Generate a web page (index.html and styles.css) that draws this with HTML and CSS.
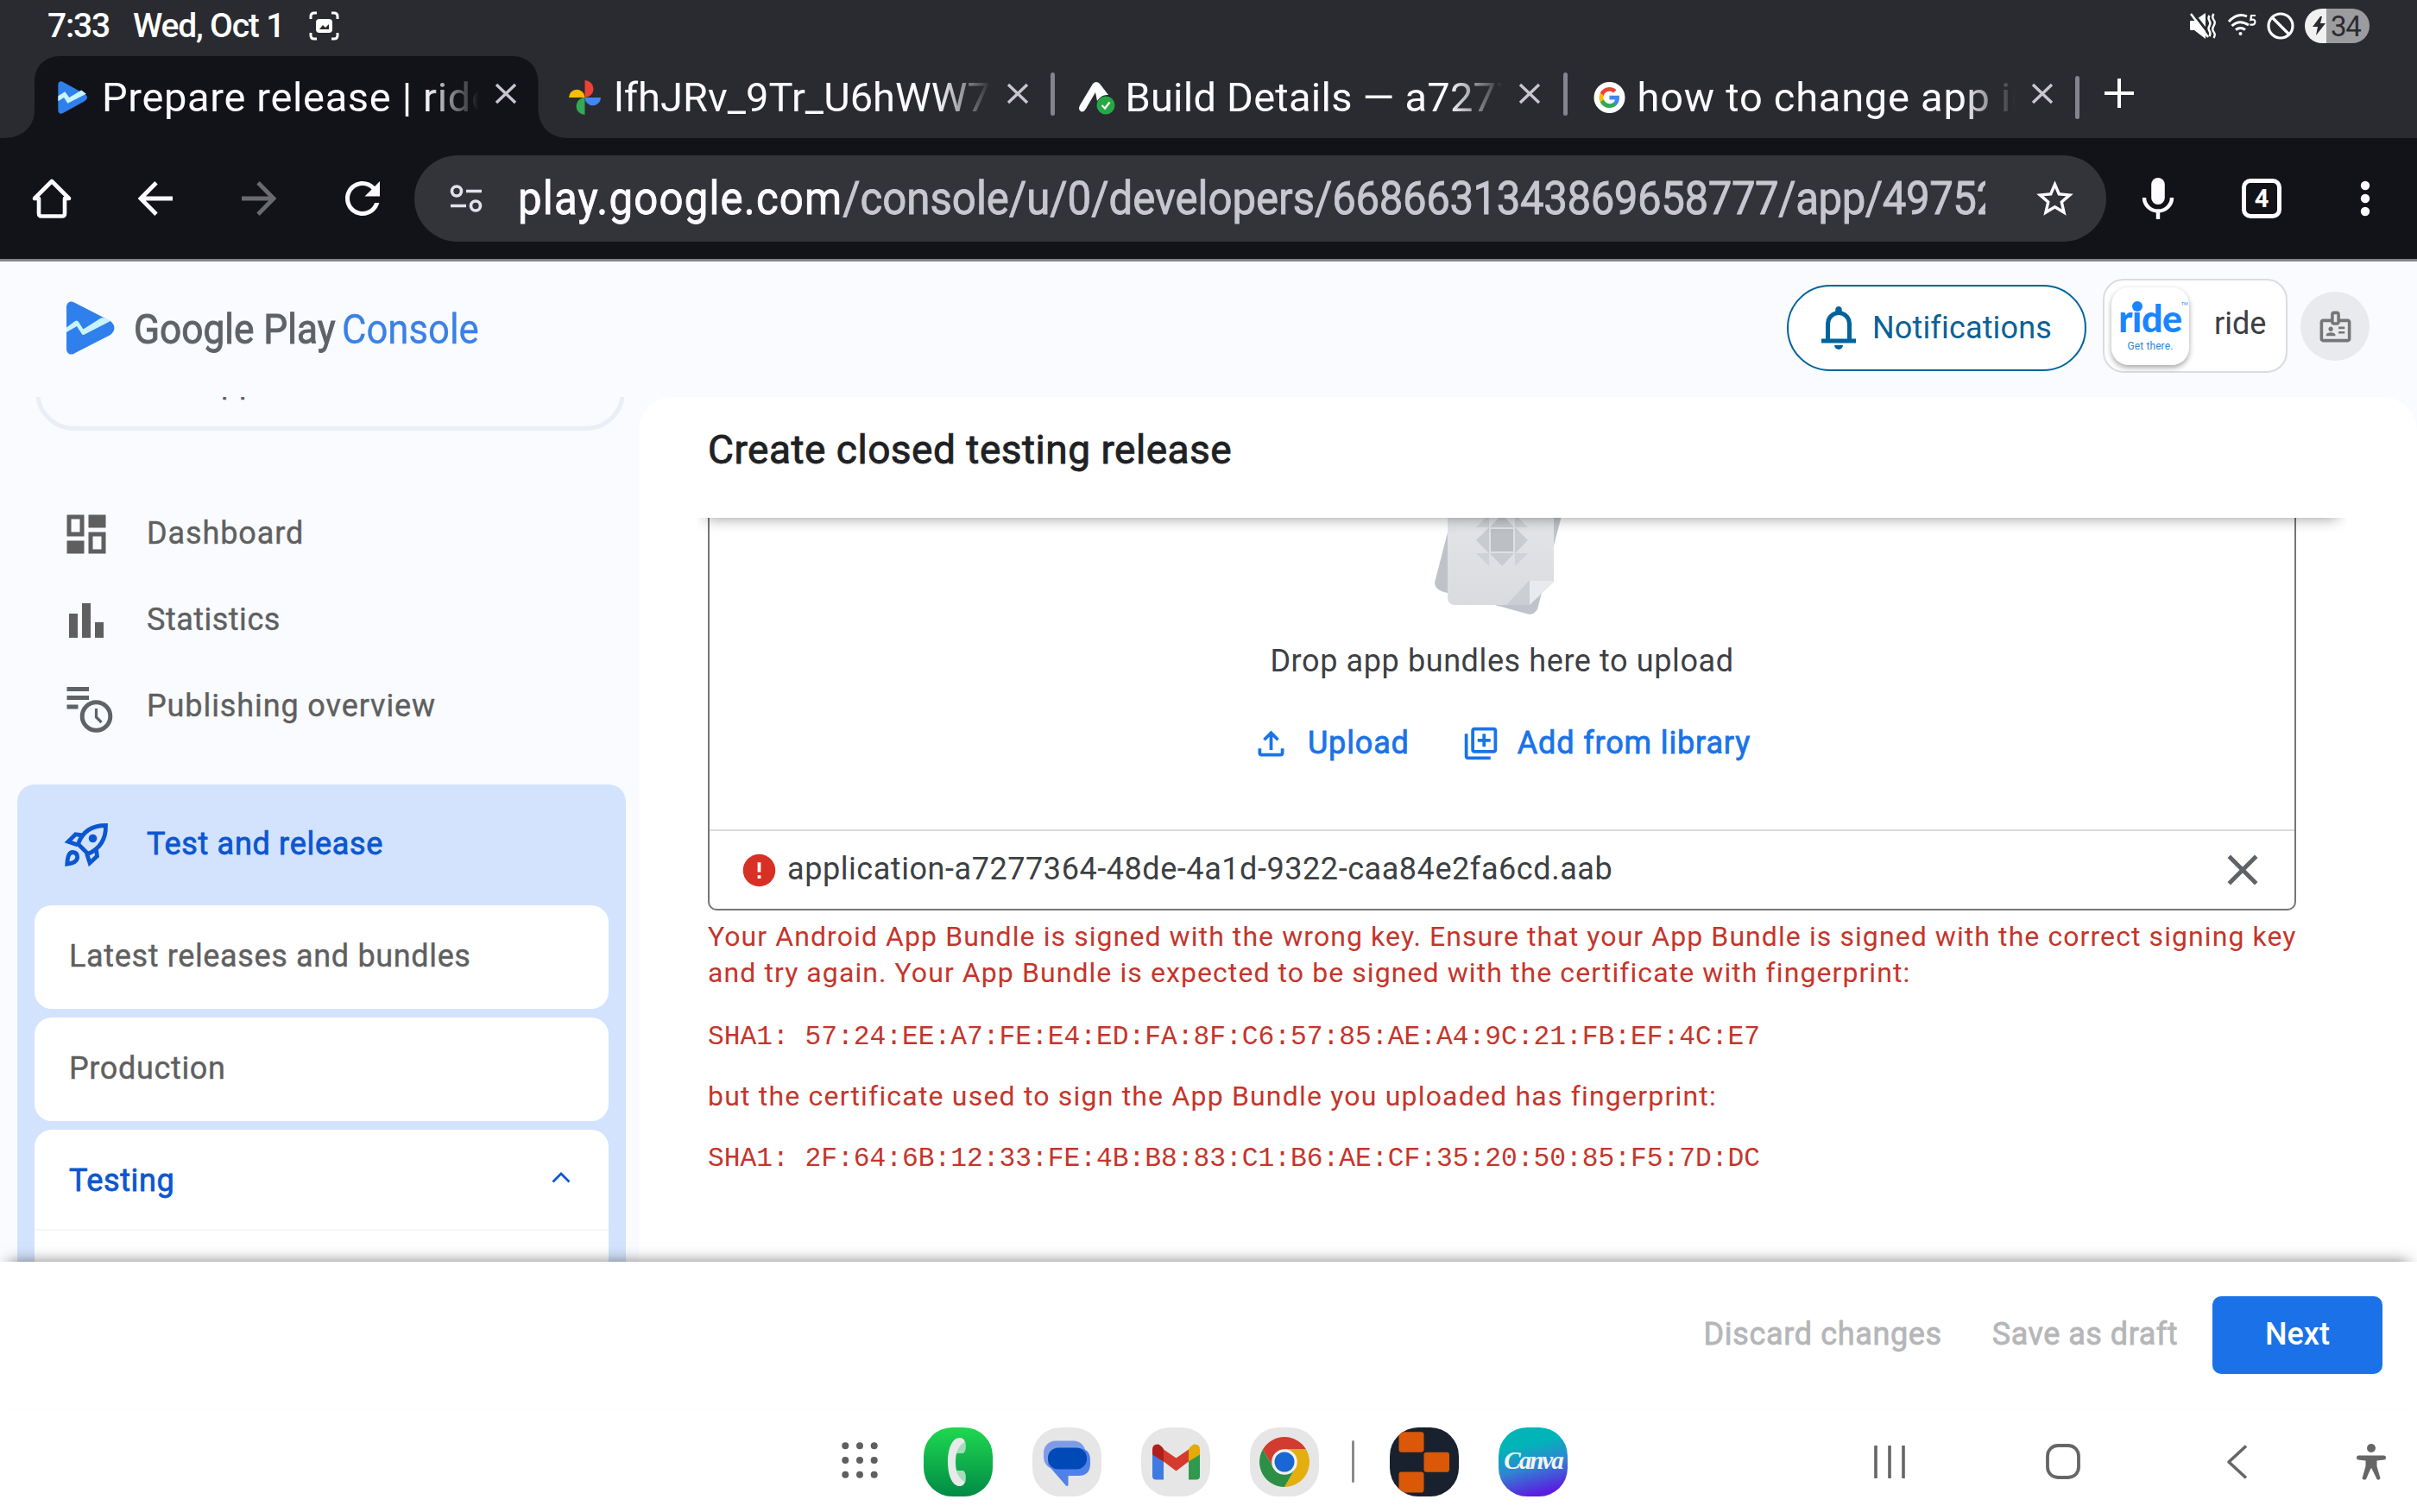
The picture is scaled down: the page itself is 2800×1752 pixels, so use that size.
FILE: index.html
```html
<!DOCTYPE html>
<html lang="en">
<head>
<meta charset="utf-8">
<title>Prepare release | ride</title>
<link rel="stylesheet" href="styles.css">
</head>
<body>
<div class="screen">

  <header class="status">
    <span class="time">7:33</span>
    <span class="date">Wed, Oct 1</span>
    <svg width="35" height="34" viewBox="0 0 35 34" fill="none" stroke="#fff" stroke-width="3"><path d="M2 9V6Q2 2 6 2H9M26 2h3q4 0 4 4v3M33 25v3q0 4-4 4h-3M9 32H6q-4 0-4-4v-3"/><rect x="8" y="9" width="19" height="16" rx="4" fill="#fff" stroke="none"/><path d="M12 21l4-5 3 3 4-4v6z" fill="#2a2b30" stroke="none"/></svg>
    <div class="indicators">
      <svg class="mute" width="30" height="30" viewBox="0 0 30 30" fill="#fff"><path d="M0 10q0-1 1-1h4l13-9v30L5 20H1q-1 0-1-1z"/><path d="M3.500 0L26 29" stroke="#2a2b30" stroke-width="3"/><path d="M1 1l20 27" stroke="#fff" stroke-width="2.500"/><path d="M22.500 3q-2 3 0 6t0 6 0 6 0 6M27.500 1q-2.500 4 0 7t0 7 0 7 0 7" fill="none" stroke="#fff" stroke-width="2.400"/></svg>
      <svg class="wifi" width="34" height="26" viewBox="0 0 34 26" fill="none" stroke="#fff" stroke-width="3"><path d="M1 9Q11-2 22 3M4.500 14Q13 6 24 13M9 18.500q5.500-4 11 0"/><circle cx="14.500" cy="23" r="2" fill="#fff" stroke="none"/><path d="M32 2h-5l-.6 5q5-1.500 5 2.500t-6 3" stroke-width="2.200"/></svg>
      <svg class="block" width="32" height="32" viewBox="0 0 32 32" fill="none" stroke="#fff" stroke-width="3.200"><circle cx="16" cy="16" r="14"/><path d="M6 6l20 20"/></svg>
      <span class="battery"><svg width="15" height="22" viewBox="0 0 15 22"><path d="M9 0L0 12h6L4 22 15 8H9l2-8z" fill="#2a2b30"/></svg>34</span>
    </div>
  </header>

  <nav class="tabs">
    <svg class="tab-shape" width="660" height="95" viewBox="0 0 660 95"><path d="M4 95C26 95 40 82 40 62V30C40 12 52 0 70 0H593.500C611 0 623.500 12 623.500 30V60C623.500 80 636 95 658 95z" fill="#121318"/></svg>
    <div class="tab">
      <svg class="favicon" width="36" height="38" viewBox="0 0 56 62"><path d="M0 7C0 1 5-1.500 10 2L50 24Q60 31 50 38L10 60C5 63.500 0 61 0 55z" fill="#2f80ed"/><path d="M0 28L13 20 21 31 44 17 53 24 18 42 11 31 0 38z" fill="#c8f4ff"/></svg>
      <span class="label t1">Prepare release | ride</span>
      <svg class="x" width="26" height="25" viewBox="0 0 26 25"><path d="M2 2l22 21M24 2L2 23"/></svg>
    </div>
    <div class="tab">
      <svg class="favicon" width="37" height="40" viewBox="0 0 37 40"><path d="M18.500 0A10 10 0 0 1 18.500 20z" fill="#ea4335"/><path d="M0 20A9.250 9.250 0 0 1 18.500 20z" fill="#fbbc04"/><path d="M18.500 40A10 10 0 0 1 18.500 20z" fill="#34a853"/><path d="M37 20A9.250 9.250 0 0 1 18.500 20z" fill="#4285f4"/></svg>
      <span class="label t2">lfhJRv_9Tr_U6hWW7_</span>
      <svg class="x" width="26" height="25" viewBox="0 0 26 25"><path d="M2 2l22 21M24 2L2 23"/></svg>
    </div>
    <div class="tab">
      <svg class="favicon wide" width="42" height="38" viewBox="0 0 42 38"><path d="M16 3Q20-1 24 3L34 16Q26 15 21 23L19 13 8 32Q4 38 1 34-1 32 1 28z" fill="#fff"/><circle cx="31" cy="28" r="10.500" fill="#28a745"/><path d="M26.500 28l3.500 3.500 5.500-7" fill="none" stroke="#fff" stroke-width="2.200"/></svg>
      <span class="label t3">Build Details — a7277</span>
      <svg class="x" width="26" height="25" viewBox="0 0 26 25"><path d="M2 2l22 21M24 2L2 23"/></svg>
    </div>
    <div class="tab">
      <svg class="favicon" width="36" height="36" viewBox="-6 -6 36 36"><circle cx="12" cy="12" r="18" fill="#fff"/><path fill="#4285f4" d="M23.500 12.270c0-.85-.08-1.670-.22-2.450H12v4.640h6.450a5.520 5.520 0 0 1-2.390 3.620v3h3.870c2.260-2.090 3.570-5.160 3.570-8.810z"/><path fill="#34a853" d="M12 24c3.240 0 5.960-1.070 7.940-2.910l-3.870-3a7.200 7.200 0 0 1-10.730-3.780h-4v3.100A12 12 0 0 0 12 24z"/><path fill="#fbbc04" d="M5.340 14.310a7.200 7.200 0 0 1 0-4.610v-3.100h-4a12 12 0 0 0 0 10.810z"/><path fill="#ea4335" d="M12 4.770c1.760 0 3.340.61 4.590 1.800l3.440-3.440A12 12 0 0 0 1.340 6.600l4 3.100A7.150 7.150 0 0 1 12 4.770z"/></svg>
      <span class="label t4">how to change app ic</span>
      <svg class="x" width="26" height="25" viewBox="0 0 26 25"><path d="M2 2l22 21M24 2L2 23"/></svg>
    </div>
    <div class="newtab"><svg width="34" height="34" viewBox="0 0 34 34"><path d="M17 0v34M0 17h34" stroke="#fff" stroke-width="4"/></svg></div>
  </nav>

  <div class="toolbar">
    <div class="cell"><svg width="46" height="46" viewBox="0 0 46 46"><path d="M23 3L3 23H8V40Q8 43.500 11 43.500H35Q38 43.500 38 40V23H43z" fill="none" stroke="#fdfbff" stroke-width="4.600" stroke-linejoin="round"/></svg></div>
    <div class="cell"><svg width="40" height="40" viewBox="0 0 40 40"><path d="M40 20H4M21 1.800L3 20 21 38.200" fill="none" stroke="#fdfbff" stroke-width="4.800"/></svg></div>
    <div class="cell"><svg width="40" height="40" viewBox="0 0 40 40"><path d="M0 20H36M19 1.800L37 20 19 38.200" fill="none" stroke="#6b6a70" stroke-width="4.800"/></svg></div>
    <div class="cell"><svg width="60" height="60" viewBox="0 0 24 24"><path fill="#fdfbff" d="M17.650 6.350C16.200 4.900 14.210 4 12 4c-4.420 0-7.990 3.580-7.990 8s3.570 8 7.990 8c3.730 0 6.840-2.550 7.730-6h-2.080c-.82 2.330-3.040 4-5.650 4-3.310 0-6-2.690-6-6s2.690-6 6-6c1.660 0 3.140.69 4.220 1.780L13 11h7V4l-2.350 2.350z"/></svg></div>
    <div class="omnibox">
      <div class="cell"><svg width="38" height="32" viewBox="0 0 38 32" fill="none" stroke="#e3e1e9" stroke-width="3.600"><circle cx="8" cy="7.500" r="5.500"/><path d="M19 7.500H37M1 24.500H19"/><circle cx="30" cy="24.500" r="5.500"/></svg></div>
      <div class="url"><div class="url-text"><span class="host">play.google.com</span><span class="path">/console/u/0/developers/</span><span class="digits">6686631343869658777/app/49752</span></div></div>
      <div class="cell"><svg width="51" height="51" viewBox="0 0 24 24"><path fill="#fdfbff" d="M22 9.240l-7.190-.62L12 2 9.190 8.630 2 9.240l5.460 4.730L5.820 21 12 17.270 18.180 21l-1.630-7.030L22 9.240zM12 15.400l-3.760 2.270 1-4.280-3.320-2.880 4.380-.38L12 6.100l1.710 4.040 4.380.38-3.320 2.880 1 4.280L12 15.400z"/></svg></div>
    </div>
    <div class="cell"><svg width="36" height="48" viewBox="0 0 36 48"><rect x="10.200" y="0" width="15.600" height="31" rx="7.800" fill="#fdfbff"/><path d="M2 23A16 15.500 0 0 0 34 23M18 38v10" fill="none" stroke="#fdfbff" stroke-width="4.400"/></svg></div>
    <div class="cell"><span class="count">4</span></div>
    <div class="cell"><svg width="12" height="42" viewBox="0 0 12 42" fill="#fdfbff"><circle cx="6" cy="6" r="5.200"/><circle cx="6" cy="21" r="5.200"/><circle cx="6" cy="36" r="5.200"/></svg></div>
  </div>

  <div class="page">
    <div class="appbar">
      <svg class="logo" width="56" height="62" viewBox="0 0 56 62"><path d="M0 7C0 1 5-1.500 10 2L51 23Q60 31 51 39L10 60C5 63.500 0 61 0 55z" fill="#2f80ed"/><path d="M0 30.600L10 23Q13 21.500 14 24L19.400 32.500 40 19.500Q45 18 51 23L21 38.500Q18.500 40 17.500 37.500L12 29 0 36z" fill="#c8f4ff"/></svg>
      <span class="brand">Google Play</span><span class="console">Console</span>
      <div class="appbar-right">
        <button class="notif"><svg width="60" height="60" viewBox="0 0 24 24"><path fill="#00639b" d="M4 19v-2h2v-7q0-2.075 1.250-3.688Q8.500 4.700 10.500 4.200v-.7q0-.625.438-1.062Q11.375 2 12 2t1.063.438Q13.500 2.875 13.500 3.500v.7q2 .5 3.250 2.112Q18 7.925 18 10v7h2v2Zm8 3q-.825 0-1.412-.587Q10 20.825 10 20h4q0 .825-.587 1.413Q12.825 22 12 22Zm-4-5h8v-7q0-1.650-1.175-2.825Q13.650 6 12 6q-1.650 0-2.825 1.175Q8 8.350 8 10Z"/></svg><span>Notifications</span></button>
        <div class="account">
          <div class="tile"><b>ride<sup>TM</sup></b><small>Get there.</small></div>
          <span>ride</span>
        </div>
        <div class="avatar"><svg width="43" height="43" viewBox="0 0 24 24"><path fill="#747775" d="M14 13.500h4V12h-4v1.500zm0 3h4V15h-4v1.500zM20 7h-5V4c0-1.100-.9-2-2-2h-2c-1.100 0-2 .9-2 2v3H4c-1.100 0-2 .9-2 2v11c0 1.100.9 2 2 2h16c1.100 0 2-.9 2-2V9c0-1.100-.9-2-2-2zM11 4h2v5h-2V4zm9 16H4V9h5c0 1.100.9 2 2 2h2c1.100 0 2-.9 2-2h5v11zM9 15c.83 0 1.500-.67 1.500-1.500S9.830 12 9 12s-1.500.67-1.500 1.500S8.170 15 9 15zm2.080 1.180c-.64-.28-1.340-.43-2.080-.43s-1.440.15-2.080.43c-.55.23-.92.78-.92 1.390V18h6v-.43c0-.61-.37-1.160-.92-1.390z"/></svg></div>
      </div>
    </div>

    <div class="body">
      <aside class="sidebar">
        <div class="appselect">All apps</div>
        <div class="nav">
          <a class="row"><svg width="60" height="60" viewBox="0 0 24 24" fill="#5f5f5f"><path d="M3 3h8v10H3zM5 5v6h4V5zM13 3h8v6h-8zM13 11h8v10h-8zM15 13v6h4v-6zM3 15h8v6H3z" fill-rule="evenodd"/></svg><span>Dashboard</span></a>
          <a class="row"><svg width="60" height="60" viewBox="0 0 24 24" fill="#5f5f5f"><path d="M4 8.800h4V20H4zM10 4h4v16h-4zM16 12.800h4V20h-4z"/></svg><span class="tight">Statistics</span></a>
          <a class="row"><svg width="60" height="60" viewBox="0 0 60 60" fill="none" stroke="#5f6368" stroke-width="5"><path d="M7.500 9.500H33M7.500 19.500H33M7.500 30H20.500"/><circle cx="41.500" cy="41" r="16.300" fill="#f9fbff"/><path d="M41.500 32v10l6 6" stroke-width="3.200"/></svg><span>Publishing overview</span></a>
        </div>
        <section class="group">
          <div class="row head"><svg width="60" height="60" viewBox="-5 -5 60 60" fill="none" stroke="#0b57d0" stroke-width="4.800"><path d="M15.500 24Q23 2.500 47.500 2.500 48 26 27 35.500z"/><path d="M21 14L12.500 12.800 4 21.300 15 25M36.500 31L37.500 38 29 46 25.500 35"/><path d="M2.800 47.200Q3.500 33.500 9 33.500 15 34 14.700 40 13.500 46 2.800 47.200z"/><circle cx="32.500" cy="17.500" r="4.800" fill="#0b57d0" stroke="none"/></svg><span>Test and release</span></div>
          <div class="cards">
            <a class="card">Latest releases and bundles</a>
            <a class="card">Production</a>
            <div class="card open"><div class="open-head"><span>Testing</span><svg width="22" height="13" viewBox="0 0 22 13"><path d="M1.500 11.500L11 2l9.500 9.500" fill="none" stroke="#0b57d0" stroke-width="2.800"/></svg></div></div>
          </div>
        </section>
      </aside>

      <main class="main">
        <div class="main-head"><h1>Create closed testing release</h1></div>
        <div class="content">
          <div class="dropbox">
            <div class="drop">
              <svg width="160" height="115" viewBox="1660 600 160 115">
                <defs><linearGradient id="sheet" x1="0" y1="0" x2="0" y2="1"><stop offset="0" stop-color="#e3e5e9"/><stop offset="1" stop-color="#d9dbdf"/></linearGradient></defs>
                <path d="M1677 617L1662 675Q1662 684 1677 687z" fill="#bfc3c9"/>
                <path d="M1798 590H1811L1781 706Q1777 713 1770 711.500L1728 700 1798 640z" fill="#c0c4ca"/>
                <path d="M1677 590H1800V674L1772 701H1686Q1677 701 1677 692z" fill="url(#sheet)"/>
                <path d="M1745 701L1772 672V701z" fill="#cbced3"/>
                <path d="M1772 673H1800L1772 701z" fill="#e8eaee"/>
                <g fill="#c8cbd0"><path d="M1725 611v30l-15-15zM1755 611v30l15-15zM1726 641h28l-14 15zM1726 611h28l-14-15z"/></g>
                <g fill="#cfd2d6"><path d="M1710 641h15v15zM1770 641h-15v15zM1710 611h15v-15zM1770 611h-15v-15z"/></g>
                <rect x="1727" y="613" width="26" height="26" fill="#bcbfc4"/>
              </svg>
              <p class="hint">Drop app bundles here to upload</p>
              <div class="links">
                <a class="link up"><svg width="45" height="45" viewBox="0 0 24 24"><path fill="#1a73e8" d="M11 16V7.850l-2.600 2.600L7 9l5-5 5 5-1.400 1.450-2.600-2.600V16zM6 20q-.825 0-1.412-.587Q4 18.825 4 18v-3h2v3h12v-3h2v3q0 .825-.587 1.413Q18.825 20 18 20z"/></svg><span>Upload</span></a>
                <a class="link lib"><svg width="45" height="45" viewBox="0 0 24 24"><path fill="#1a73e8" d="M20 2H8c-1.100 0-2 .9-2 2v12c0 1.100.9 2 2 2h12c1.100 0 2-.9 2-2V4c0-1.100-.9-2-2-2zm0 14H8V4h12v12zm-7-2h2v-3h3V9h-3V6h-2v3h-3v2h3v3zM4 6H2v14c0 1.100.9 2 2 2h14v-2H4V6z"/></svg><span>Add from library</span></a>
              </div>
            </div>
            <div class="file">
              <svg width="45" height="45" viewBox="0 0 24 24"><circle cx="12" cy="12" r="10" fill="#d93025"/><path d="M11 7h2v6h-2zM11 15h2v2h-2z" fill="#fff"/></svg>
              <span>application-a7277364-48de-4a1d-9322-caa84e2fa6cd.aab</span>
              <svg class="remove" width="60" height="60" viewBox="0 0 24 24"><path fill="#5f6368" d="M19 6.410L17.590 5 12 10.590 6.410 5 5 6.410 10.590 12 5 17.590 6.410 19 12 13.410 17.590 19 19 17.590 13.410 12z"/></svg>
            </div>
          </div>
          <div class="error">
            <p class="e1">Your Android App Bundle is signed with the wrong key. Ensure that your App Bundle is signed with the correct signing key<br>and try again. Your App Bundle is expected to be signed with the certificate with fingerprint:</p>
            <p class="sha">SHA1: 57:24:EE:A7:FE:E4:ED:FA:8F:C6:57:85:AE:A4:9C:21:FB:EF:4C:E7</p>
            <p class="e2">but the certificate used to sign the App Bundle you uploaded has fingerprint:</p>
            <p class="sha last">SHA1: 2F:64:6B:12:33:FE:4B:B8:83:C1:B6:AE:CF:35:20:50:85:F5:7D:DC</p>
          </div>
        </div>
      </main>
    </div>
  </div>

  <div class="actions">
    <span class="discard">Discard changes</span>
    <span class="draft">Save as draft</span>
    <button class="next"><span>Next</span></button>
  </div>

  <footer class="dock">
    <svg class="grid" width="42" height="42" viewBox="0 0 42 42" fill="#5f5f5f"><circle cx="4.300" cy="4.300" r="4"/><circle cx="21" cy="4.300" r="4"/><circle cx="37.700" cy="4.300" r="4"/><circle cx="4.300" cy="21" r="4"/><circle cx="21" cy="21" r="4"/><circle cx="37.700" cy="21" r="4"/><circle cx="4.300" cy="37.700" r="4"/><circle cx="21" cy="37.700" r="4"/><circle cx="37.700" cy="37.700" r="4"/></svg>
    <div class="apps">
      <div class="app phone"><svg width="80" height="80" viewBox="0 0 80 80"><path d="M38 30C39 23 43 17 48.500 17Q50 27 46 30zM38 50C39 57 43 63 48.500 63Q50 53 46 50z" fill="#a5dcb8"/><path d="M43 12C33 11 28 25 28 40 28 55 33 69 43 68Q47 67 48 63C41 60 37 52 37 40 37 28 41 20 48 17Q47 13 43 12z" fill="#e8eae9"/></svg></div>
      <div class="app"><svg width="80" height="80" viewBox="0 0 80 80"><rect x="13" y="15.500" width="48.500" height="33" rx="14" fill="#7e9ce6"/><path d="M18 38Q18 24 30 24H53Q67 24 67 38V42Q67 56 53 56H41.500V67Q40 69 38.500 67L18.500 44z" fill="#5080e8"/><rect x="18" y="23.500" width="45" height="25" rx="12" fill="#004ab8"/></svg></div>
      <div class="app"><svg width="80" height="80" viewBox="-13 -19.600 80 80"><path d="M0 11h13v30H4q-4 0-4-4z" fill="#4079e0"/><path d="M42 11h13v26q0 4-4 4h-9z" fill="#31994e"/><path d="M13 6L27.500 16 42 6v14L27.500 31 13 20z" fill="#d33b2f"/><path d="M0 12V6q0-6 6-6 3 0 7 5.500V20z" fill="#b01f1c"/><path d="M55 12V6q0-6-6-6-3 0-7 5.500V20z" fill="#e4ab06"/></svg></div>
      <div class="app"><svg width="80" height="80" viewBox="-40 -40 80 80"><path d="M-25.100-14.500A29 29 0 0 1 25.100-14.500H0L-12.560 7.250z" fill="#d23b2f"/><path d="M25.100-14.500A29 29 0 0 1 0 29L12.560 7.250 0-14.500z" fill="#e5ae0f"/><path d="M0 29A29 29 0 0 1-25.100-14.500L-12.560 7.250H12.560z" fill="#2c8f45"/><circle r="14.800" fill="#f1f1f1"/><circle r="11.500" fill="#1967d2"/></svg></div>
    </div>
    <i class="sep"></i>
    <div class="apps">
      <div class="app replit"><svg width="80" height="80" viewBox="0 0 80 80" fill="#da5807"><rect x="10.500" y="5.300" width="29" height="23.500" rx="3"/><rect x="39.500" y="28.800" width="29.500" height="23" rx="3"/><rect x="10.500" y="51.500" width="29" height="24" rx="3"/></svg></div>
      <div class="app canva">Canva</div>
    </div>
    <div class="sysnav">
      <svg width="36" height="38" viewBox="0 0 36 38"><path d="M2 0v38M18 0v38M34 0v38" stroke="#666" stroke-width="3.600"/></svg>
      <svg class="home" width="40" height="41" viewBox="0 0 40 41"><rect x="2" y="2" width="36" height="37" rx="12" fill="none" stroke="#666" stroke-width="3.800"/></svg>
      <svg class="back" width="25" height="40" viewBox="0 0 25 40"><path d="M23 1.500L3 20 23 38.500" fill="none" stroke="#666" stroke-width="3.600" stroke-linejoin="round"/></svg>
      <svg class="acc" width="34" height="42" viewBox="0 0 34 42" fill="#666"><circle cx="17" cy="5" r="5"/><path d="M2 13.500H32Q34 13.500 34 16T32 18.500L23.500 19.500V26L27.500 40Q26 43 23.500 41L17.500 28.500H16.500L11 41Q8 43 6.500 40L10.500 26V19.500L2 18.500Q0 18.500 0 16T2 13.500z"/></svg>
    </div>
  </footer>
</div>
</body>
</html>
```

FILE: styles.css
```css
* { box-sizing: border-box; }
body { margin: 0; font-family: "Roboto", sans-serif; background: #fff; }
p, h1 { margin: 0; font-weight: 400; }
button { font: inherit; margin: 0; padding: 0; border: 0; }
svg { display: block; flex: none; overflow: visible; }
.screen { width: 2800px; height: 1752px; overflow: hidden; display: flex; flex-direction: column; white-space: nowrap; }

/* status bar */
.status { height: 65px; padding: 0 55px 5px; background: #2a2b30; color: #fff; display: flex; align-items: center; font-size: 39px; font-weight: 500; letter-spacing: -1.2px; flex: none; }
.time { width: 99px; }
.date { width: 204px; }
.indicators { margin-left: auto; display: flex; align-items: center; }
.wifi { margin-left: 14px; margin-bottom: 3px; }
.block { margin-left: 11px; }
.battery { margin-left: 12px; width: 75px; height: 40px; border-radius: 20px; background: linear-gradient(90deg, #f1f1f1 25px, #9c9c9f 25px); color: #2a2b30; display: flex; align-items: center; gap: 6px; padding-left: 9px; font-size: 33px; font-weight: 400; letter-spacing: -1.2px; }

/* tab strip */
.tabs { position: relative; height: 95px; background: #2a2b30; display: flex; align-items: center; padding-left: 30px; flex: none; }
.tab-shape { position: absolute; left: 0; top: 0; }
.tab { position: relative; width: 593.2px; display: flex; align-items: center; padding-left: 36px; }
.tab:nth-of-type(n+3)::before, .newtab::before { content: ""; position: absolute; left: 1px; top: 50%; width: 5px; height: 50px; margin-top: -29px; border-radius: 3px; background: #85838d; }
.favicon { width: 37px; }
.favicon.wide { width: 42px; margin: 0 -3px 0 -2px; }
.label { width: 438px; margin-left: 14px; overflow: hidden; font-size: 47px; line-height: 60px; color: #fdfbff; -webkit-mask-image: linear-gradient(90deg, #000 375px, transparent 438px); mask-image: linear-gradient(90deg, #000 375px, transparent 438px); }
.t1 { letter-spacing: .65px; padding-left: 1px; }
.t2 { letter-spacing: .05px; padding-left: 1px; }
.t3 { letter-spacing: .25px; }
.t4 { letter-spacing: .75px; }
.x { margin: 0 0 9px 18px; fill: none; stroke: #c9c6d0; stroke-width: 3.4px; }
.newtab { position: relative; padding: 0 0 9px 35px; }
.newtab::before { margin-top: -25px; }

/* toolbar */
.toolbar { height: 143px; background: #121318; border-bottom: 3px solid #85838d; display: flex; align-items: center; flex: none; }
.cell { width: 120px; display: flex; justify-content: center; align-items: center; flex: none; }
.omnibox { width: 1960px; height: 100px; border-radius: 50px; background: #33343a; display: flex; align-items: center; }
.url { width: 1700px; margin-right: 20px; overflow: hidden; }
.url-text { width: 1868px; transform: scaleX(.91); transform-origin: left; font-size: 54px; line-height: 100px; color: #c8c6d0; -webkit-text-stroke: .9px currentColor; }
.host { color: #fdfbff; letter-spacing: 1.3px; }
.path { letter-spacing: 0; }
.digits { letter-spacing: -.45px; }
.count { width: 46px; height: 46px; border: 5px solid #fdfbff; border-radius: 10px; color: #fdfbff; font-size: 29px; font-weight: 700; line-height: 37px; text-align: center; }

/* console header */
.page { height: 1159px; background: #f9fbff; display: flex; flex-direction: column; overflow: hidden; flex: none; }
.appbar { height: 157px; padding: 0 55px 3px 77px; display: flex; align-items: center; flex: none; }
.brand { margin: 2px 0 0 22px; width: 242px; font-size: 48px; color: #5f6368; transform: scaleX(.92); transform-origin: left; -webkit-text-stroke: 1px currentColor; }
.console { margin-top: 2px; font-size: 48px; color: #3a80e6; transform: scaleX(.91); transform-origin: left; margin-left: -1px; -webkit-text-stroke: .3px currentColor; }
.appbar-right { margin-left: auto; display: flex; align-items: center; }
.notif { width: 347px; height: 100px; border: 2px solid #00639b; border-radius: 50px; background: #fff; color: #0b6196; display: flex; align-items: center; padding-left: 28px; gap: 9px; font-size: 36px; letter-spacing: .15px; }
.account { margin: 0 15px 5px 19px; width: 214px; height: 109px; border: 2px solid #dadce0; border-radius: 24px; background: #fff; display: flex; align-items: center; padding-left: 8px; color: #3c4043; font-size: 36px; }
.account > span { margin: 0 0 6px 29px; }
.tile { position: relative; width: 90px; height: 90px; border-radius: 20px; background: #fff; box-shadow: 0 3px 6px rgba(0,0,0,.35); display: flex; flex-direction: column; align-items: center; padding-top: 12px; }
.tile::after { content: ""; position: absolute; left: 24px; top: 16px; width: 12px; height: 12px; border-radius: 50%; background: #1a85ff; }
.tile b { position: relative; font: 900 43px/48px "Lato", sans-serif; color: #1a85ff; letter-spacing: -.4px; }
.tile sup { position: absolute; right: -7px; top: 3px; font-size: 5px; line-height: 8px; font-weight: 400; letter-spacing: 0; }
.tile small { font-size: 12px; line-height: 14px; color: #2b86d6; margin-top: 1px; letter-spacing: .1px; }
.avatar { width: 80px; height: 80px; border-radius: 50%; background: #e8eaed; display: flex; align-items: center; justify-content: center; margin-bottom: 4px; }

/* sidebar */
.body { height: 1002px; display: flex; flex: none; overflow: hidden; }
.sidebar { width: 740px; flex: none; font-size: 36px; color: #5f5f5f; -webkit-text-stroke: .4px currentColor; }
.appselect { margin: -51px 0 0 41px; width: 683px; height: 90px; border: 5px solid #e9eef7; border-radius: 50px; padding: 8px 0 0 136px; line-height: 42px; letter-spacing: .9px; }
.nav { margin-top: 69px; letter-spacing: .9px; }
.row { height: 100px; padding-left: 70px; display: flex; align-items: center; gap: 40px; }
.row svg { position: relative; top: 1px; }
.tight { letter-spacing: .5px; }
.group { margin: 41px 0 0 20px; width: 705px; height: 700px; border-radius: 20px; background: #d3e3fd; }
.head { height: 140px; padding: 0 0 3px 50px; color: #0b57d0; letter-spacing: .7px; -webkit-text-stroke: .8px currentColor; }
.cards { padding: 0 20px; display: flex; flex-direction: column; gap: 10px; }
.card { height: 120px; border-radius: 20px; background: #fff; padding-left: 40px; line-height: 119px; letter-spacing: .65px; }
.open { height: 400px; padding: 0; }
.open-head { height: 117px; border-bottom: 2px solid #f6f7f8; padding: 0 44px 0 40px; display: flex; align-items: center; justify-content: space-between; color: #0b57d0; letter-spacing: .6px; -webkit-text-stroke: .8px currentColor; }
.open-head span { padding-top: 3px; }
.open-head svg { margin-bottom: 5px; }

/* main panel */
.main { flex: 1; background: #fff; border-radius: 40px 40px 0 0; }
.main-head { position: relative; z-index: 1; height: 140px; margin-left: 68px; width: 1910px; padding: 0 0 19px 12px; background: #fff; display: flex; align-items: center; box-shadow: 0 10px 16px -10px rgba(0,0,0,.42); clip-path: inset(0 0 -30px 0); }
h1 { font-size: 46px; letter-spacing: .5px; color: #202124; -webkit-text-stroke: .9px currentColor; }
.content { margin-left: 80px; width: 1840px; }
.dropbox { height: 455px; border: 2px solid #747775; border-top: 0; border-radius: 0 0 10px 10px; display: flex; flex-direction: column; }
.drop { height: 361px; display: flex; flex-direction: column; align-items: center; }
.hint { margin-top: 30px; font-size: 36px; line-height: 42px; letter-spacing: .6px; color: #3c4043; }
.links { margin: 44px 2px 0 0; height: 60px; display: flex; align-items: center; gap: 60px; font-size: 36px; color: #1a73e8; letter-spacing: .85px; -webkit-text-stroke: .8px currentColor; }
.link { display: flex; align-items: center; gap: 20px; }
.file { height: 92px; border-top: 2px solid #dadce0; display: flex; align-items: center; padding: 0 30px 0 35px; gap: 10px; font-size: 36px; letter-spacing: .56px; color: #3c4043; }
.file span { margin-bottom: 2px; }
.remove { margin-left: auto; }
.error { margin-top: 9px; font-size: 32px; line-height: 42px; color: #c5352b; }
.e1 { letter-spacing: 1.08px; }
.e2 { letter-spacing: 1.19px; margin-top: 26px; }
.sha { margin-top: 33px; font-family: "Liberation Mono", monospace; font-size: 31.25px; }
.sha.last { margin-top: 31px; }

/* bottom action bar */
.actions { position: relative; z-index: 2; height: 170px; background: #fff; box-shadow: 0 -10px 16px -10px rgba(0,0,0,.5); display: flex; align-items: center; justify-content: flex-end; padding-right: 40px; font-size: 36px; color: #b5b6b8; flex: none; }
.discard, .draft { -webkit-text-stroke: .8px currentColor; }
.discard { letter-spacing: .65px; margin: 0 58px 2px 0; }
.draft { letter-spacing: .5px; margin: 0 40px 2px 0; }
.next { width: 197px; height: 90px; border-radius: 10px; background: #1b72e8; color: #fff; font-weight: 500; }
.next span { display: block; padding-bottom: 2px; }

/* taskbar */
.dock { height: 120px; padding: 3px 36px 0 975px; background: #fff; display: flex; align-items: center; flex: none; }
.grid { margin: 0 53px 3px 0; }
.apps { display: flex; gap: 46px; }
.app { width: 80px; height: 80px; border-radius: 33px; background: #e6e6e6; overflow: hidden; }
.phone { background: linear-gradient(#1fd850, #008a45); }
.replit { background: #1a212e; }
.canva { background: linear-gradient(165deg, #00b4b8 28%, #2f86d0 55%, #5a1ee0 88%); color: #f3f3f3; font: italic 700 29px/76px "Liberation Serif", serif; letter-spacing: -2px; text-align: center; }
.sep { width: 3px; height: 49px; margin: 0 41px 0 38px; background: #8a8a8a; border-radius: 2px; }
.sysnav { margin-left: auto; display: flex; align-items: center; }
.home { margin-left: 163px; }
.back { margin-left: 169px; }
.acc { margin-left: 126px; }
```
